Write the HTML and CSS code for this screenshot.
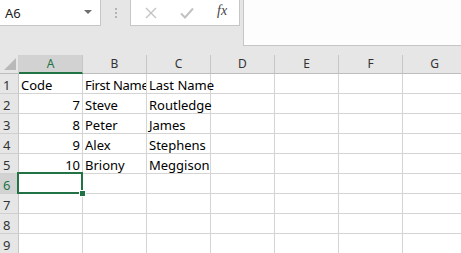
FILE: index.html
```html
<!DOCTYPE html>
<html lang="en">
<head>
    <meta charset="UTF-8">
    <title>Sheet</title>
    <link rel="stylesheet" href="styles.css">
</head>
<body>

    <div class="top">
        <div class="namebox">
            <span class="ref">A6</span>
            <svg class="caret" width="8" height="5" viewBox="0 0 8 5"><path d="M0 0 L8 0 L4 4 Z" fill="#6e6e6e"/></svg>
        </div>
        <div class="grip">
            <span></span><span></span><span></span>
        </div>
        <div class="buttons">
            <svg width="12" height="12" viewBox="0 0 12 12"><path d="M1 1 L11 11 M11 1 L1 11" stroke="#c2c2c2" stroke-width="1.3"/></svg>
            <svg width="14" height="12" viewBox="0 0 14 12"><path d="M1 6.5 L5 10.5 L13 1.5" stroke="#c2c2c2" stroke-width="2" fill="none"/></svg>
            <span class="fx">fx</span>
        </div>
        <div class="formula"></div>
    </div>

    <div class="sheet">
        <div class="corner"><svg width="12" height="12" viewBox="0 0 12 12"><path d="M12 0 L12 12 L0 12 Z" fill="#b9b9b9"/></svg></div>
        <div class="colhead active">A</div>
        <div class="colhead">B</div>
        <div class="colhead">C</div>
        <div class="colhead">D</div>
        <div class="colhead">E</div>
        <div class="colhead">F</div>
        <div class="colhead">G</div>

        <div class="rowhead">1</div>
        <div class="cell">Code</div><div class="cell tight">First Name</div><div class="cell spill">Last Name</div><div class="cell"></div><div class="cell"></div><div class="cell"></div><div class="cell"></div>

        <div class="rowhead">2</div>
        <div class="cell num">7</div><div class="cell">Steve</div><div class="cell spill">Routledge</div><div class="cell"></div><div class="cell"></div><div class="cell"></div><div class="cell"></div>

        <div class="rowhead">3</div>
        <div class="cell num">8</div><div class="cell">Peter</div><div class="cell">James</div><div class="cell"></div><div class="cell"></div><div class="cell"></div><div class="cell"></div>

        <div class="rowhead">4</div>
        <div class="cell num">9</div><div class="cell">Alex</div><div class="cell">Stephens</div><div class="cell"></div><div class="cell"></div><div class="cell"></div><div class="cell"></div>

        <div class="rowhead">5</div>
        <div class="cell num">10</div><div class="cell">Briony</div><div class="cell">Meggison</div><div class="cell"></div><div class="cell"></div><div class="cell"></div><div class="cell"></div>

        <div class="rowhead active">6</div>
        <div class="cell selected"><span class="handle"></span></div><div class="cell"></div><div class="cell"></div><div class="cell"></div><div class="cell"></div><div class="cell"></div><div class="cell"></div>

        <div class="rowhead">7</div>
        <div class="cell"></div><div class="cell"></div><div class="cell"></div><div class="cell"></div><div class="cell"></div><div class="cell"></div><div class="cell"></div>

        <div class="rowhead">8</div>
        <div class="cell"></div><div class="cell"></div><div class="cell"></div><div class="cell"></div><div class="cell"></div><div class="cell"></div><div class="cell"></div>

        <div class="rowhead">9</div>
        <div class="cell"></div><div class="cell"></div><div class="cell"></div><div class="cell"></div><div class="cell"></div><div class="cell"></div><div class="cell"></div>
    </div>

</body>
</html>
```

FILE: styles.css
```css
body {
    margin: 0;
    width: 461px;
    height: 253px;
    overflow: hidden;
    background-color: #e6e6e6;
    font-family: "Noto Sans", "Open Sans", sans-serif;
}
.top {
    display: flex;
    align-items: flex-start;
    height: 55px;
}
.namebox {
    box-sizing: border-box;
    width: 101px;
    height: 26px;
    background: #fff;
    border: 1px solid #c6c6c6;
    border-left: none;
    border-top: none;
    display: flex;
    align-items: center;
    justify-content: space-between;
    padding: 0 8px 0 5px;
    font-size: 13px;
    color: #222;
}
.caret {
    margin-top: -1px;
}
.grip {
    width: 29px;
    display: flex;
    flex-direction: column;
    align-items: center;
    gap: 2px;
    padding-top: 8px;
}
.grip span {
    width: 2px;
    height: 2px;
    background: #b3b3b3;
}
.buttons {
    box-sizing: border-box;
    width: 110px;
    height: 26px;
    background: #fff;
    border: 1px solid #c6c6c6;
    border-top: none;
    display: flex;
    align-items: center;
    padding-left: 14px;
    gap: 23px;
}
.fx {
    font-family: "Liberation Serif", serif;
    font-style: italic;
    font-size: 14px;
    color: #444;
    margin-top: -3px;
}
.formula {
    box-sizing: border-box;
    flex: 1;
    margin-left: 3px;
    height: 46px;
    background: #fdfdfd;
    border: 1px solid #c6c6c6;
    border-top: none;
    border-right: none;
}
.sheet {
    display: grid;
    grid-template-columns: 19px repeat(7, 64px);
    grid-template-rows: 19px repeat(9, 20px);
}
.corner {
    border-right: 1px solid #d0d0d0;
    border-bottom: 1px solid #bdbdbd;
    display: flex;
    align-items: flex-end;
    justify-content: flex-end;
    padding: 0 2px 3px 0;
    box-sizing: border-box;
}
.colhead {
    box-sizing: border-box;
    border-right: 1px solid #c6c6c6;
    border-bottom: 1px solid #bdbdbd;
    font-size: 12px;
    color: #333;
    text-align: center;
    line-height: 18px;
}
.colhead.active {
    background: #d2d2d2;
    color: #217346;
    border-bottom: 2px solid #217346;
}
.rowhead {
    box-sizing: border-box;
    border-right: 1px solid #c6c6c6;
    border-bottom: 1px solid #d0d0d0;
    font-size: 13px;
    color: #333;
    padding-left: 3px;
    line-height: 22px;
}
.rowhead.active {
    background: #d2d2d2;
    color: #217346;
    border-right: 2px solid #217346;
}
.cell {
    box-sizing: border-box;
    position: relative;
    background: #fff;
    border-right: 1px solid #d4d4d4;
    border-bottom: 1px solid #d4d4d4;
    font-size: 13px;
    color: #000;
    line-height: 23px;
    padding: 0 2px;
    white-space: nowrap;
    overflow: hidden;
    text-overflow: clip;
}
/* text wider than its column runs on into the empty cell beside it */
.cell.spill {
    overflow: visible;
    z-index: 1;
    line-height: 23px;
    height: 20px;
}
.cell.tight {
    letter-spacing: -0.3px;
}
.cell.num {
    text-align: right;
}
.selected {
    overflow: visible;
}
.selected::before {
    content: "";
    position: absolute;
    left: -2px;
    top: -2px;
    right: -1px;
    bottom: -1px;
    border: 2px solid #217346;
}
.handle {
    position: absolute;
    right: -4px;
    bottom: -4px;
    width: 5px;
    height: 5px;
    background: #217346;
    border: 1px solid #fff;
    z-index: 2;
}
```
